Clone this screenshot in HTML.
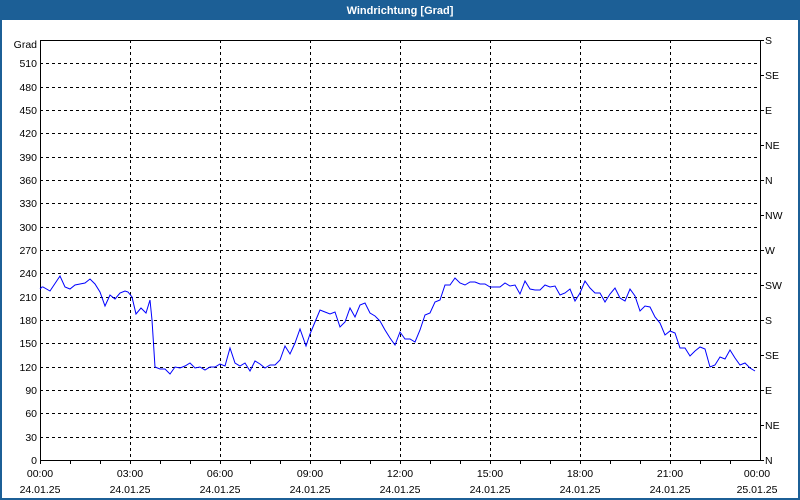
<!DOCTYPE html>
<html><head><meta charset="utf-8"><style>
html,body{margin:0;padding:0;width:800px;height:500px;overflow:hidden;background:#fff;font-family:"Liberation Sans",sans-serif}
</style></head><body>
<svg width="800" height="500" xmlns="http://www.w3.org/2000/svg" font-family="Liberation Sans, sans-serif" font-size="10.5">
<rect x="0" y="0" width="800" height="500" fill="#1c5f96"/>
<rect x="2" y="20" width="796" height="478" fill="#fff"/>
<text x="400" y="14" fill="#fff" font-weight="bold" font-size="11" text-anchor="middle">Windrichtung [Grad]</text>
<g stroke="#000" stroke-width="1" stroke-dasharray="3,3" shape-rendering="crispEdges">
<line x1="130.5" y1="40" x2="130.5" y2="460"/><line x1="220.5" y1="40" x2="220.5" y2="460"/><line x1="310.5" y1="40" x2="310.5" y2="460"/><line x1="400.5" y1="40" x2="400.5" y2="460"/><line x1="490.5" y1="40" x2="490.5" y2="460"/><line x1="580.5" y1="40" x2="580.5" y2="460"/><line x1="670.5" y1="40" x2="670.5" y2="460"/>
<line x1="40" y1="437.5" x2="760" y2="437.5"/><line x1="40" y1="413.5" x2="760" y2="413.5"/><line x1="40" y1="390.5" x2="760" y2="390.5"/><line x1="40" y1="367.5" x2="760" y2="367.5"/><line x1="40" y1="343.5" x2="760" y2="343.5"/><line x1="40" y1="320.5" x2="760" y2="320.5"/><line x1="40" y1="297.5" x2="760" y2="297.5"/><line x1="40" y1="273.5" x2="760" y2="273.5"/><line x1="40" y1="250.5" x2="760" y2="250.5"/><line x1="40" y1="227.5" x2="760" y2="227.5"/><line x1="40" y1="203.5" x2="760" y2="203.5"/><line x1="40" y1="180.5" x2="760" y2="180.5"/><line x1="40" y1="157.5" x2="760" y2="157.5"/><line x1="40" y1="133.5" x2="760" y2="133.5"/><line x1="40" y1="110.5" x2="760" y2="110.5"/><line x1="40" y1="87.5" x2="760" y2="87.5"/><line x1="40" y1="63.5" x2="760" y2="63.5"/>
</g>
<g stroke="#000" stroke-width="1" shape-rendering="crispEdges" fill="none">
<path d="M40.5 40 V460.5 H760.5 V40 M40 40.5 H760"/>
<path d="M70.5 460 v4 M100.5 460 v4 M130.5 460 v4 M160.5 460 v4 M190.5 460 v4 M220.5 460 v4 M250.5 460 v4 M280.5 460 v4 M310.5 460 v4 M340.5 460 v4 M370.5 460 v4 M400.5 460 v4 M430.5 460 v4 M460.5 460 v4 M490.5 460 v4 M520.5 460 v4 M550.5 460 v4 M580.5 460 v4 M610.5 460 v4 M640.5 460 v4 M670.5 460 v4 M700.5 460 v4 M730.5 460 v4 M40.5 460 v4"/>
<path d="M760 40.5 h4 M760 75.5 h4 M760 110.5 h4 M760 145.5 h4 M760 180.5 h4 M760 215.5 h4 M760 250.5 h4 M760 285.5 h4 M760 320.5 h4 M760 355.5 h4 M760 390.5 h4 M760 425.5 h4 M760 460.5 h4"/>
</g>
<polyline fill="none" stroke="#0000ff" stroke-width="1" points="40,289 42,287 43,287 50,291 60,276 65,287 70,289 75,285 80,284 85,283 90,279 95,284 100,292 105,306 110,295 115,299 120,293 125,291 128,292 132,297 136,314 141,308 146,313 150,300 152,320 155,367 160,369 165,369 170,374 175,367 180,368 185,366 190,363 195,368 200,367 205,370 210,367 215,367 220,364 225,366 230,348 235,363 240,366 245,363 250,371 255,361 260,364 265,368 270,365 275,365 280,360 285,346 290,354 295,343 300,329 306,346 310,334 315,322 320,310 325,312 330,314 335,312 340,327 345,322 350,308 355,317 360,305 365,303 370,313 375,316 380,321 385,330 390,338 395,345 400,332 405,339 410,339 415,342 420,330 425,315 430,313 435,302 440,300 445,285 450,285 455,278 460,283 465,285 470,282 475,282 480,284 485,284 490,287 495,287 500,287 505,283 510,286 515,285 520,294 525,281 530,289 535,290 540,290 545,285 550,287 555,286 560,295 565,293 570,289 575,301 580,293 585,281 590,288 595,293 600,293 605,302 610,294 615,288 620,298 625,301 630,289 635,296 640,311 645,306 650,307 655,317 660,323 665,335 670,331 675,333 680,348 685,348 690,356 695,351 700,347 705,349 710,367 715,365 720,357 725,359 730,350 735,358 740,365 745,363 750,368 755,371"/>
<g fill="#000" text-anchor="end">
<text x="37" y="48">Grad</text>
<text x="37" y="67">510</text><text x="37" y="91">480</text><text x="37" y="114">450</text><text x="37" y="137">420</text><text x="37" y="161">390</text><text x="37" y="184">360</text><text x="37" y="207">330</text><text x="37" y="231">300</text><text x="37" y="254">270</text><text x="37" y="277">240</text><text x="37" y="301">210</text><text x="37" y="324">180</text><text x="37" y="347">150</text><text x="37" y="371">120</text><text x="37" y="394">90</text><text x="37" y="417">60</text><text x="37" y="441">30</text><text x="37" y="464">0</text>
</g>
<g fill="#000">
<text x="765" y="44">S</text><text x="765" y="79">SE</text><text x="765" y="114">E</text><text x="765" y="149">NE</text><text x="765" y="184">N</text><text x="765" y="219">NW</text><text x="765" y="254">W</text><text x="765" y="289">SW</text><text x="765" y="324">S</text><text x="765" y="359">SE</text><text x="765" y="394">E</text><text x="765" y="429">NE</text><text x="765" y="464">N</text>
</g>
<g fill="#000" text-anchor="middle">
<text x="40" y="477">00:00</text><text x="130" y="477">03:00</text><text x="220" y="477">06:00</text><text x="310" y="477">09:00</text><text x="400" y="477">12:00</text><text x="490" y="477">15:00</text><text x="580" y="477">18:00</text><text x="670" y="477">21:00</text><text x="757" y="477">00:00</text>
<text x="40" y="493">24.01.25</text><text x="130" y="493">24.01.25</text><text x="220" y="493">24.01.25</text><text x="310" y="493">24.01.25</text><text x="400" y="493">24.01.25</text><text x="490" y="493">24.01.25</text><text x="580" y="493">24.01.25</text><text x="670" y="493">24.01.25</text><text x="757" y="493">25.01.25</text>
</g>
</svg>
</body></html>
